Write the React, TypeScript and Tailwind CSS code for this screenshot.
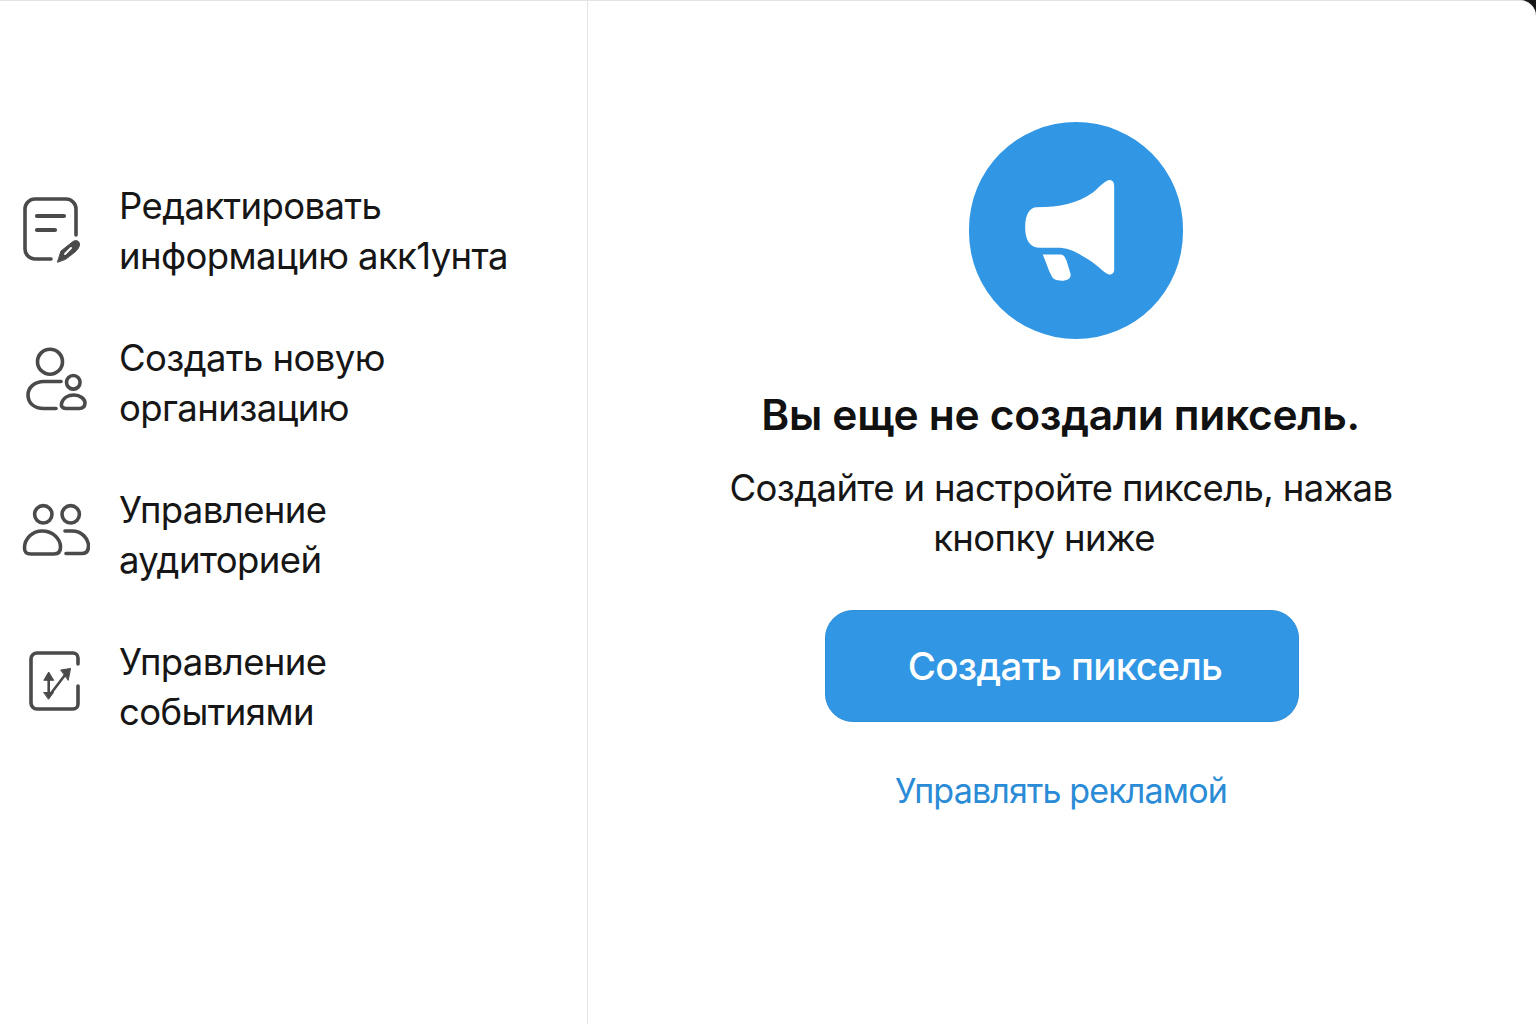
const EditIcon = () => (
    <svg width="70" height="80" viewBox="20 192 70 80" fill="none" stroke="#4a4a4a" strokeWidth="3.6" strokeLinecap="round">
        <path d="M51 259H35a10 10 0 0 1-10-10V209a10 10 0 0 1 10-10H66a10 10 0 0 1 10 10V235" />
        <path d="M37 216h27M37 230h18" strokeWidth="4.2" />
        <path d="M57.5 262L61 251L73 241.5C76 239.5 80 241 79.5 245C79 248 77 250 75 252L66 259Z" fill="#4a4a4a" strokeWidth="1" strokeLinejoin="round" />
        <path d="M65 254l6-6" stroke="#fff" strokeWidth="2" />
    </svg>
);

const NewOrgIcon = () => (
    <svg width="70" height="80" viewBox="20 344 70 80" fill="none" stroke="#4a4a4a" strokeWidth="3.6" strokeLinecap="round">
        <circle cx="50" cy="361.7" r="12.5" />
        <path d="M61 381.5H44C34 381.5 28 388 28 395C28 403 34 408.5 44 408.5H56" />
        <circle cx="73.3" cy="382.3" r="6.8" />
        <path d="M66 408.5C62 408.5 61 406 61.5 403.5C63 398 68 395 74 395C80 395 85 399 85 403C85 407 83 408.5 79 408.5Z" />
    </svg>
);

const AudienceIcon = () => (
    <svg width="70" height="80" viewBox="20 496 70 80" fill="none" stroke="#4a4a4a" strokeWidth="3.6" strokeLinecap="round">
        <circle cx="43.3" cy="514.3" r="8.7" />
        <circle cx="70.7" cy="514.3" r="8.7" />
        <path d="M31 554C26 554 24.5 552 24.5 548C24.5 538 33 531 42 531C53 531 60.5 539 60.5 547C60.5 552 58 554 54 554Z" />
        <path d="M65 531H72C82 531 88.5 539 88.5 546C88.5 551 86 553.5 82 553.5H66" />
    </svg>
);

const EventsIcon = () => (
    <svg width="70" height="80" viewBox="20 648 70 80" fill="none" stroke="#4a4a4a" strokeWidth="3.6" strokeLinecap="round" strokeLinejoin="round">
        <path d="M78 664V658a5 5 0 0 0-5-5H37a6 6 0 0 0-6 6V703a6 6 0 0 0 6 6H73a5 5 0 0 0 5-5V686" />
        <path d="M48.7 675V695" strokeWidth="2.6" />
        <path d="M44 680L48.7 672L53.5 680ZM44 692.5H53.5L48.7 699Z" fill="#4a4a4a" strokeWidth="1" />
        <path d="M49 696L68 671" strokeWidth="2.6" />
        <path d="M61 670L70.5 668.5L68.3 680Z" fill="#4a4a4a" strokeWidth="1" />
    </svg>
);

const MegaphoneIcon = () => (
    <svg width="90" height="103" viewBox="195 205 270 310" fill="#fff">
        <path d="M230 290C300 290 350 280 400 245C420 228 435 210 448 208C458 208 463 215 463 225V478C463 488 455 495 445 492C430 485 410 460 370 438C340 420 320 412 290 412H240C210 412 195 390 195 350C195 310 210 290 230 290Z" />
        <path d="M248 432H300C312 432 315 440 320 452L330 485C336 500 328 510 310 511C295 512 282 510 275 498C265 480 258 455 248 432Z" />
    </svg>
);

const items = [
    { icon: <EditIcon />, lines: ['Редактировать', 'информацию акк1унта'] },
    { icon: <NewOrgIcon />, lines: ['Создать новую', 'организацию'] },
    { icon: <AudienceIcon />, lines: ['Управление', 'аудиторией'] },
    { icon: <EventsIcon />, lines: ['Управление', 'событиями'] }
];

export default function App() {
    return (
        <div className="h-screen w-full overflow-hidden bg-[#161616] font-['Inter','Liberation_Sans',sans-serif]">
            <div className="flex h-full rounded-tr-[16px] border-t border-[#e4e4e4] bg-white">
                {/* Left menu */}
                <div className="w-[588px] shrink-0 border-r border-[#e3e3e3] pt-[181px]">
                    <div className="flex flex-col gap-[53px]">
                        {items.map(item => (
                            <div key={item.lines[0]} className="flex items-start">
                                <div className="w-[119px] shrink-0 pt-[10px] pl-[20px]">{item.icon}</div>
                                <div className="-mt-px text-[36.5px] leading-[50px] tracking-[-0.6px] whitespace-nowrap text-[#161616]">
                                    {item.lines.map(line => (
                                        <div key={line}>{line}</div>
                                    ))}
                                </div>
                            </div>
                        ))}
                    </div>
                </div>

                {/* Empty state */}
                <div className="flex flex-1 flex-col items-center pt-[121px]">
                    <div className="ml-[28px] flex h-[217px] w-[214px] shrink-0 items-center justify-center rounded-full bg-[#3196e3] pr-[12px]">
                        <MegaphoneIcon />
                    </div>
                    <h1 className="mt-[48px] pr-[3px] text-[42.5px] leading-[56px] font-semibold tracking-[-0.3px] whitespace-nowrap text-[#111]">
                        Вы еще не создали пиксель.
                    </h1>
                    <p className="mt-[20px] pr-[2px] text-center text-[36.5px] leading-[50px] tracking-[-0.62px] whitespace-nowrap text-[#161616]">
                        Создайте и настройте пиксель, нажав
                        <span className="block pr-[34px]">кнопку ниже</span>
                    </p>
                    <button className="mt-[47px] flex h-[112px] w-[474px] shrink-0 items-center justify-center rounded-[28px] border border-[#2f8dd6] bg-[#3196e3] pt-[2px] pl-[6px] text-[38.5px] font-medium tracking-[-0.65px] text-white">
                        Создать пиксель
                    </button>
                    <a className="mt-[44px] pr-[2px] text-[34px] leading-[50px] tracking-[-0.85px] text-[#2a8bd6]">Управлять рекламой</a>
                </div>
            </div>
        </div>
    );
}
